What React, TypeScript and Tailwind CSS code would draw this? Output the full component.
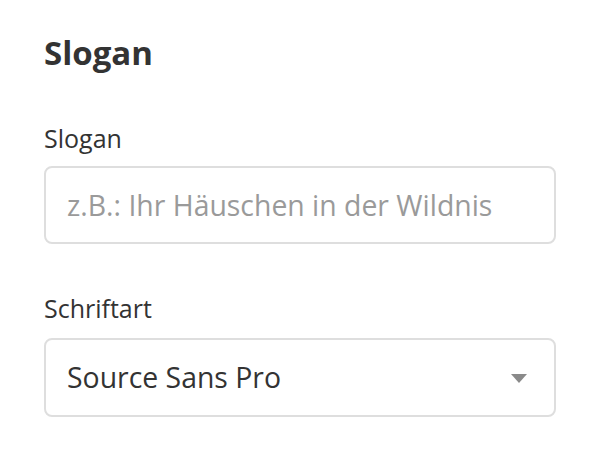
import { useState } from "react";

export default function App() {
  const [slogan, setSlogan] = useState("");
  const [font, setFont] = useState("Source Sans Pro");

  return (
    <div className="w-[610px] h-[474px] bg-white px-[44px] pt-[31px] font-['Open_Sans',sans-serif] text-[#333]">
      <h2 className="text-[33px] font-bold leading-[44px]">Slogan</h2>

      <label className="mt-[47px] block text-[25px] leading-[32px]">Slogan</label>
      <input
        value={slogan}
        onChange={(e) => setSlogan(e.target.value)}
        placeholder="z.B.: Ihr Häuschen in der Wildnis"
        className="mt-[12px] block h-[78px] w-[512px] rounded-[8px] border-2 border-[#dedede] px-[21px] text-[28.4px] text-[#333] outline-none placeholder:text-[#9a9a9a]"
      />

      <label className="mt-[48px] block text-[25px] leading-[32px]">Schriftart</label>
      <div className="relative mt-[14px] h-[79px] w-[512px]">
        <select
          value={font}
          onChange={(e) => setFont(e.target.value)}
          className="block h-full w-full appearance-none rounded-[8px] border-2 border-[#dedede] bg-white px-[21px] text-[28.4px] text-[#333] outline-none"
        >
          <option>Source Sans Pro</option>
        </select>
        <svg
          className="pointer-events-none absolute right-[29px] top-[36px]"
          width="16"
          height="9"
          viewBox="0 0 16 9"
        >
          <polygon points="0,0 16,0 8,9" fill="#8a8a8a" />
        </svg>
      </div>
    </div>
  );
}
